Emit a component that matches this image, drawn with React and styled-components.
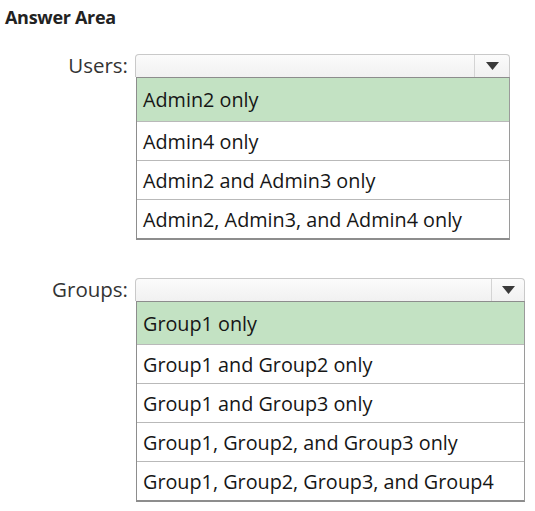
import React from "react";
import styled, { createGlobalStyle } from "styled-components";

const GlobalStyle = createGlobalStyle`
  html, body {
    margin: 0;
    padding: 0;
    background: #ffffff;
  }
  body {
    font-family: "Open Sans", "Noto Sans", "Liberation Sans", sans-serif;
    color: #1b1b1b;
  }
`;

const Page = styled.div`
  width: 535px;
  height: 511px;
  box-sizing: border-box;
  padding: 3px 0 0 5px;
  overflow: hidden;
`;

const Heading = styled.h1`
  margin: 0;
  font-size: 18px;
  font-weight: 700;
  letter-spacing: -0.3px;
  line-height: 28px;
  color: #222;
`;

const Sections = styled.div`
  display: flex;
  flex-direction: column;
  gap: 38px;
  margin-top: 23px;
`;

const Field = styled.div`
  display: grid;
  grid-template-columns: 130px ${(p) => p.$width}px;
  align-items: start;
`;

const Label = styled.label`
  justify-self: end;
  padding-right: 7px;
  font-size: 20.5px;
  line-height: 23px;
  color: #333;
`;

const Control = styled.div`
  display: flex;
  flex-direction: column;
`;

const Select = styled.div`
  display: flex;
  height: 23px;
  box-sizing: border-box;
  border: 1px solid #c9c9c9;
  border-bottom: none;
  border-radius: 4px 4px 0 0;
  background: linear-gradient(#fbfbfb, #f1f1f1);
`;

const SelectValue = styled.div`
  flex: 1;
`;

const ArrowButton = styled.div`
  width: ${(p) => p.$w}px;
  display: flex;
  align-items: center;
  justify-content: center;
  border-left: 1px solid #d4d4d4;
`;

const Options = styled.ul`
  list-style: none;
  margin: 0 0 0 1px;
  padding: 0;
  border: 1px solid #8d8d8d;
  border-bottom-width: 2px;
  border-right-color: #9a9a9a;
  background: #fff;
`;

const Option = styled.li`
  height: ${(p) => p.$h}px;
  display: flex;
  align-items: center;
  padding-left: 6px;
  font-size: 19.8px;
  color: #161616;
  background: ${(p) => (p.$selected ? "#c3e2c3" : "#fff")};
  & + & {
    border-top: 1px solid #b9b9b9;
  }
`;

const Caret = () => (
  <svg width="13" height="8" viewBox="0 0 13 8">
    <path d="M0 0 H13 L6.5 8 Z" fill="#3a3a3a" />
  </svg>
);

const fields = [
  {
    label: "Users:",
    width: 375,
    arrow: 34,
    first: 43,
    row: 38,
    options: [
      "Admin2 only",
      "Admin4 only",
      "Admin2 and Admin3 only",
      "Admin2, Admin3, and Admin4 only",
    ],
  },
  {
    label: "Groups:",
    width: 390,
    arrow: 32,
    first: 42,
    row: 38,
    options: [
      "Group1 only",
      "Group1 and Group2 only",
      "Group1 and Group3 only",
      "Group1, Group2, and Group3 only",
      "Group1, Group2, Group3, and Group4",
    ],
  },
];

export default function App() {
  return (
    <>
      <GlobalStyle />
      <Page>
        <Heading>Answer Area</Heading>
        <Sections>
          {fields.map((f) => (
            <Field key={f.label} $width={f.width}>
              <Label>{f.label}</Label>
              <Control>
                <Select>
                  <SelectValue />
                  <ArrowButton $w={f.arrow}>
                    <Caret />
                  </ArrowButton>
                </Select>
                <Options>
                  {f.options.map((o, i) => (
                    <Option key={o} $selected={i === 0} $h={i === 0 ? f.first : f.row}>
                      {o}
                    </Option>
                  ))}
                </Options>
              </Control>
            </Field>
          ))}
        </Sections>
      </Page>
    </>
  );
}
